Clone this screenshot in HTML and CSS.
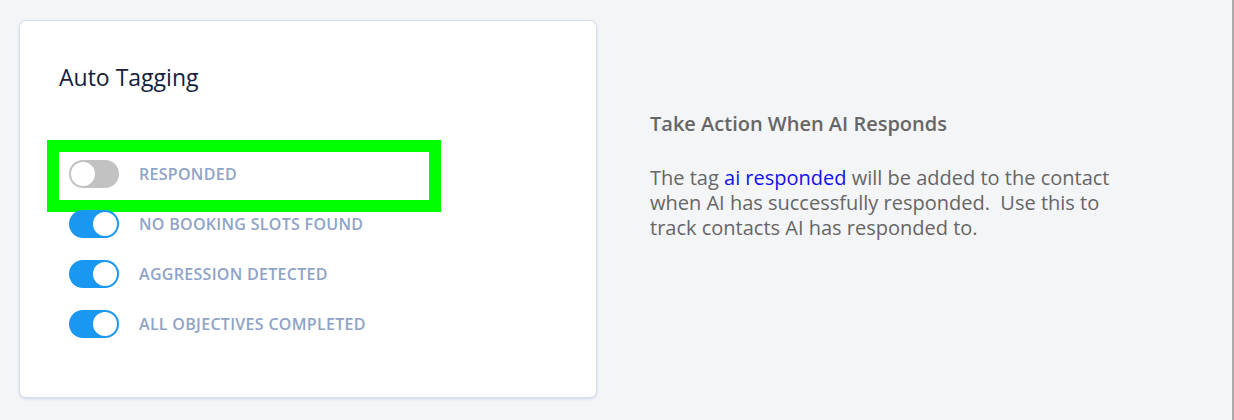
FILE: index.html
```html
<!DOCTYPE html>
<html>
<head>
<meta charset="utf-8">
<link rel="stylesheet" href="styles.css">
</head>
<body>
<div class="page">
  <section class="card">
    <h2 class="card-title">Auto Tagging</h2>
    <ul class="toggles">
      <li class="toggle-row highlighted">
        <span class="switch off"><span class="knob"></span></span>
        <span class="label">RESPONDED</span>
      </li>
      <li class="toggle-row">
        <span class="switch on"><span class="knob"></span></span>
        <span class="label">NO BOOKING SLOTS FOUND</span>
      </li>
      <li class="toggle-row">
        <span class="switch on"><span class="knob"></span></span>
        <span class="label">AGGRESSION DETECTED</span>
      </li>
      <li class="toggle-row">
        <span class="switch on"><span class="knob"></span></span>
        <span class="label">ALL OBJECTIVES COMPLETED</span>
      </li>
    </ul>
  </section>
  <aside class="info">
    <h3 class="info-title">Take Action When AI Responds</h3>
    <p class="info-text">The tag <a class="tag-link">ai responded</a> will be added to the contact when AI has successfully responded.&nbsp; Use this to track contacts AI has responded to.</p>
  </aside>
  <div class="edge"></div>
</div>
</body>
</html>
```
FILE: styles.css
```css
html, body {
  margin: 0;
  padding: 0;
}
body {
  background: #f4f5f7;
  font-family: "Open Sans", "Liberation Sans", sans-serif;
  width: 1234px;
  height: 420px;
  overflow: hidden;
}
.page {
  display: flex;
  align-items: flex-start;
  height: 420px;
  box-sizing: border-box;
  padding: 20px 0 0 19px;
}
.card {
  width: 578px;
  height: 378px;
  box-sizing: border-box;
  background: #fff;
  border: 1px solid #d5deeb;
  border-radius: 7px;
  box-shadow: 0 1px 3px rgba(140, 160, 200, 0.35);
  padding: 41px 0 0 39px;
}
.card-title {
  margin: 0;
  font-size: 23px;
  font-weight: 400;
  line-height: 30px;
  color: #14213d;
}
.toggles {
  list-style: none;
  margin: 68px 0 0 0;
  padding: 0;
  display: flex;
  flex-direction: column;
  gap: 22px;
}
.toggle-row {
  position: relative;
  display: flex;
  align-items: center;
  height: 28px;
  padding-left: 10px;
}
.toggle-row.highlighted::before {
  content: "";
  position: absolute;
  left: -12px;
  top: -20px;
  width: 370px;
  height: 48px;
  border: 12px solid #00ff00;
}
.switch {
  position: relative;
  width: 50px;
  height: 28px;
  border-radius: 14px;
  box-sizing: border-box;
  flex: none;
}
.switch.off {
  background: #c2c2c2;
}
.switch.on {
  background: #1a98f1;
}
.knob {
  position: absolute;
  top: 2px;
  width: 24px;
  height: 24px;
  border-radius: 50%;
  background: #fff;
}
.switch.off .knob {
  left: 2px;
}
.switch.on .knob {
  right: 2px;
}
.label {
  margin-left: 20px;
  font-size: 16px;
  font-weight: 600;
  color: #8ea3c6;
  letter-spacing: 0.3px;
}
.info {
  margin-left: 53px;
  padding-top: 91px;
  width: 480px;
}
.info-title {
  margin: 0;
  font-size: 20px;
  font-weight: 600;
  line-height: 26px;
  color: #666;
}
.info-text {
  margin: 28px 0 0 0;
  font-size: 20px;
  line-height: 25px;
  color: #666;
  width: 470px;
}
.tag-link {
  color: #1010f0;
}
.edge {
  margin-left: auto;
  width: 2px;
  height: 420px;
  margin-top: -20px;
  background: #ababab;
}
```
